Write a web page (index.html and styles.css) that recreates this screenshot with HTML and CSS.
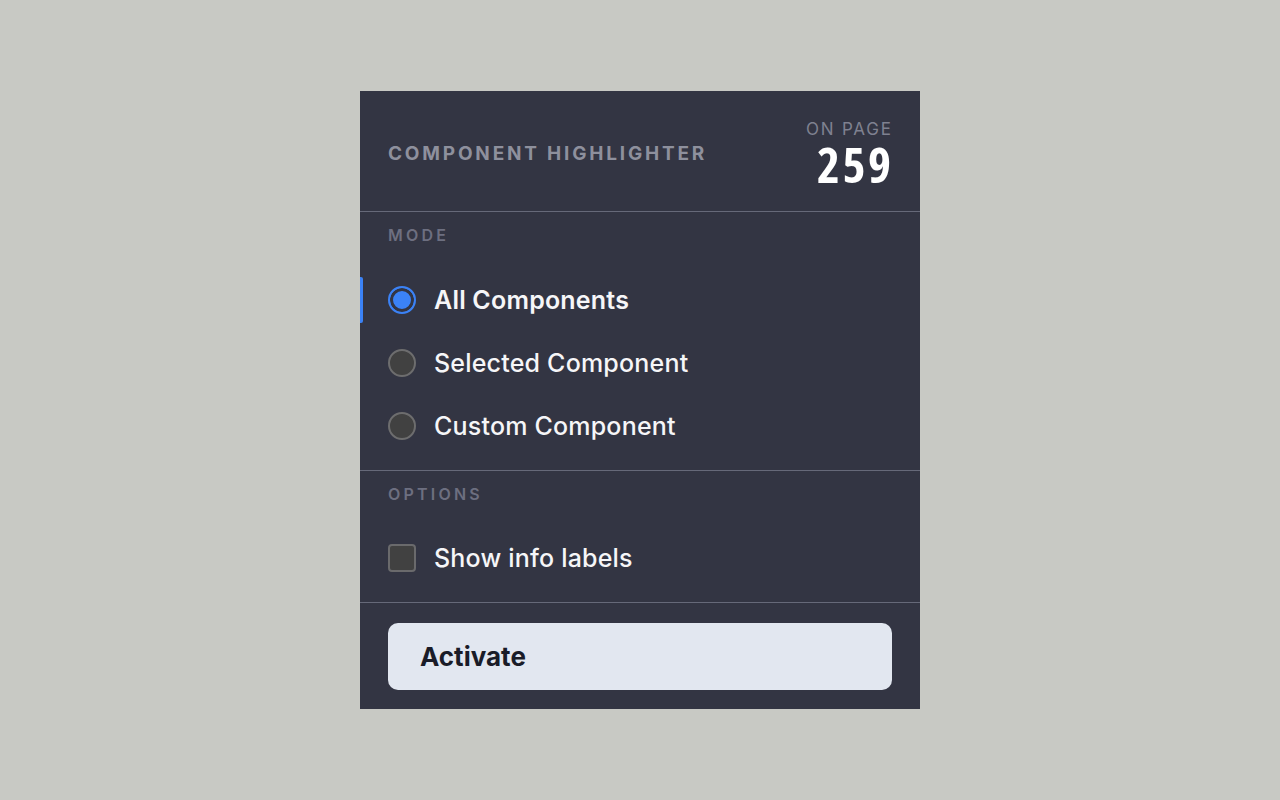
FILE: index.html
```html
<!DOCTYPE html>
<html lang="en">
<head>
<meta charset="utf-8">
<title>Component Highlighter</title>
<link rel="stylesheet" href="styles.css">
</head>
<body>
<div class="panel">
  <header class="header">
    <div class="title">Component Highlighter</div>
    <div class="count">
      <div class="count-label">On page</div>
      <div class="count-value">259</div>
    </div>
  </header>
  <section class="section">
    <div class="section-label">Mode</div>
    <div class="rows">
      <label class="row active"><span class="radio on"></span><span class="row-text">All Components</span></label>
      <label class="row"><span class="radio"></span><span class="row-text">Selected Component</span></label>
      <label class="row"><span class="radio"></span><span class="row-text">Custom Component</span></label>
    </div>
  </section>
  <section class="section options">
    <div class="section-label">Options</div>
    <div class="rows">
      <label class="row"><span class="check"></span><span class="row-text">Show info labels</span></label>
    </div>
  </section>
  <section class="footer">
    <button class="btn">Activate</button>
  </section>
</div>
</body>
</html>
```
FILE: styles.css
```css
html, body { margin: 0; padding: 0; }
body {
  background: #c8c9c4;
  min-height: 100vh;
  display: flex;
  align-items: center;
  justify-content: center;
  font-family: Inter, "Noto Sans", sans-serif;
}
.panel {
  width: 560px;
  background: #333543;
  color: #f4f4f6;
  display: flex;
  flex-direction: column;
}
.header {
  height: 120px;
  padding: 0 29px 0 28px;
  display: flex;
  align-items: center;
  justify-content: space-between;
  border-bottom: 1px solid #666979;
}
.title {
  font-size: 19px;
  font-weight: 700;
  letter-spacing: 2.8px;
  text-transform: uppercase;
  color: #8e909d;
  padding-top: 5px;
}
.count {
  display: flex;
  flex-direction: column;
  align-items: flex-end;
  gap: 1px;
  padding-top: 7px;
}
.count-label {
  font-size: 17px;
  line-height: 18px;
  letter-spacing: 1.8px;
  margin-right: -1.8px;
  text-transform: uppercase;
  color: #7f8190;
}
.count-value {
  font-family: "Open Sans", Roboto, sans-serif;
  font-stretch: 80%;
  font-size: 49px;
  line-height: 50px;
  font-weight: 700;
  letter-spacing: 2.5px;
  margin-right: -2.5px;
  color: #ffffff;
}
.section {
  padding: 13px 0 21px;
  border-bottom: 1px solid #666979;
}
.section-label {
  padding: 0 28px;
  font-size: 16px;
  line-height: 20px;
  font-weight: 600;
  letter-spacing: 3.2px;
  text-transform: uppercase;
  color: #6d6f80;
  margin-bottom: 32px;
}
.options .section-label { margin-bottom: 31px; }
.rows {
  display: flex;
  flex-direction: column;
  gap: 17px;
}
.row {
  position: relative;
  height: 46px;
  padding: 0 28px;
  display: flex;
  align-items: center;
  gap: 18px;
}
.row.active::before {
  content: "";
  position: absolute;
  left: 0;
  top: 0;
  bottom: 0;
  width: 3px;
  border-radius: 0 2px 2px 0;
  background: #3b82f6;
}
.row-text {
  font-size: 25px;
  font-weight: 500;
  letter-spacing: 0.2px;
  color: #f6f6f8;
}
.row.active .row-text { font-weight: 600; }
.radio {
  width: 28px;
  height: 28px;
  box-sizing: border-box;
  border-radius: 50%;
  border: 2px solid #6d6d6e;
  background: #414141;
  flex: none;
}
.radio.on {
  border-color: #3b82f6;
  background: #3b82f6;
  box-shadow: inset 0 0 0 3px #333543;
}
.check {
  width: 28px;
  height: 28px;
  box-sizing: border-box;
  border-radius: 4px;
  border: 2px solid #6a6a6c;
  background: #414141;
  flex: none;
}
.footer {
  padding: 20px 28px 19px;
}
.btn {
  width: 100%;
  height: 67px;
  border: none;
  border-radius: 10px;
  background: #e2e7f0;
  color: #1a1c28;
  font-family: Inter, "Noto Sans", sans-serif;
  font-size: 26px;
  font-weight: 700;
  text-align: left;
  padding: 0 32px;
  display: block;
}
```
